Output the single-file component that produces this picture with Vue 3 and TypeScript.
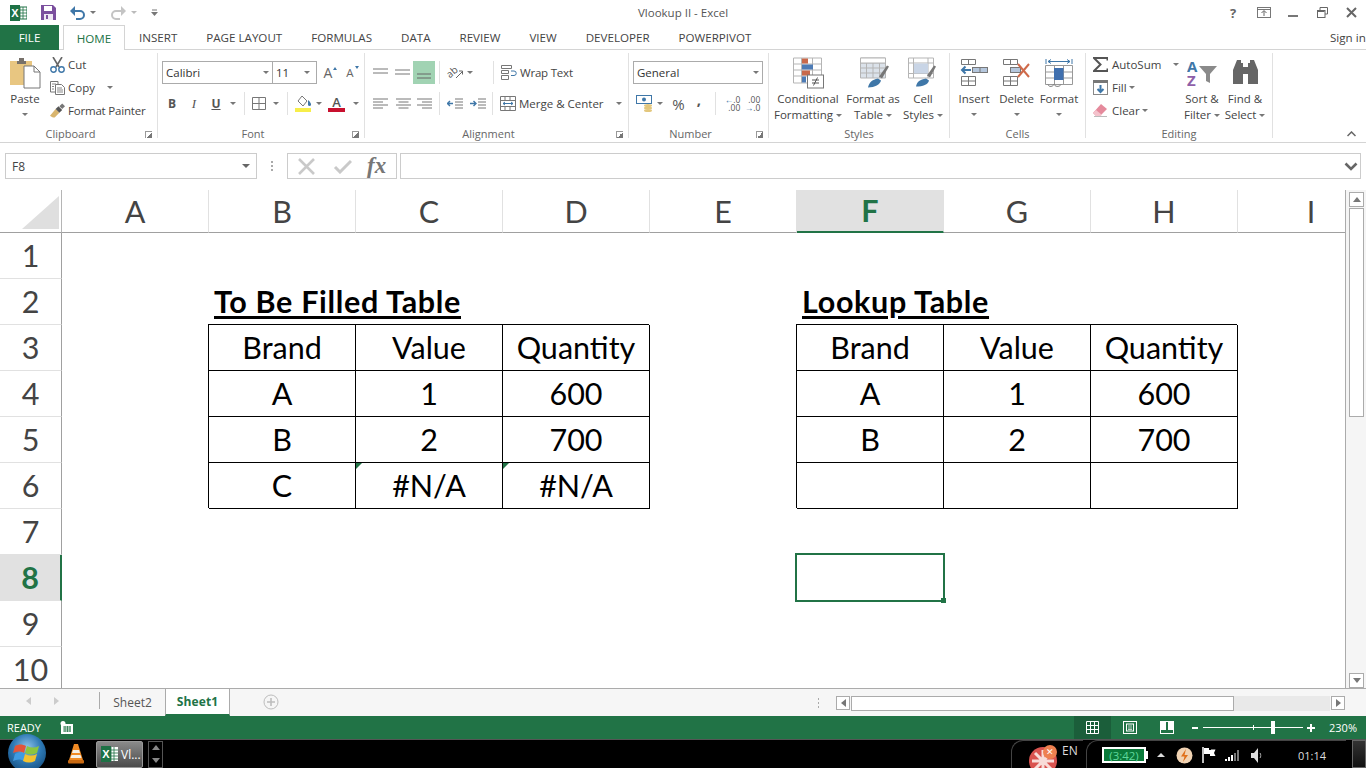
<script setup lang="ts">
const cols = ['A', 'B', 'C', 'D', 'E', 'F', 'G', 'H', 'I']
const rows = [1, 2, 3, 4, 5, 6, 7, 8, 9, 10]
const tabs = ['INSERT', 'PAGE LAYOUT', 'FORMULAS', 'DATA', 'REVIEW', 'VIEW', 'DEVELOPER', 'POWERPIVOT']

const values: Record<string, string> = {
  B2: 'To Be Filled Table', F2: 'Lookup Table',
  B3: 'Brand', C3: 'Value', D3: 'Quantity',
  B4: 'A', C4: '1', D4: '600',
  B5: 'B', C5: '2', D5: '700',
  B6: 'C', C6: '#N/A', D6: '#N/A',
  F3: 'Brand', G3: 'Value', H3: 'Quantity',
  F4: 'A', G4: '1', H4: '600',
  F5: 'B', G5: '2', H5: '700'
}

function cellClass(c: string, r: number) {
  return {
    title: r === 2,
    boxed: r >= 3 && r <= 6 && 'BCDFGH'.includes(c),
    flag: r === 6 && (c === 'C' || c === 'D')
  }
}
</script>

<template>
  <div class="app">
    <header class="titlebar">
      <div class="qat">
        <svg class="q-logo" width="17" height="16" viewBox="0 0 17 16"><rect x="7" y="2" width="10" height="12" fill="#fff" stroke="#1e7145"/><path d="M10 2v12M13 2v12M7 5h10M7 8h10M7 11h10" stroke="#1e7145" stroke-width=".8"/><rect width="10" height="16" fill="#1e7145"/><text x="5" y="12" text-anchor="middle" class="logo-x">X</text></svg>
        <svg class="q-save" width="15" height="15" viewBox="0 0 15 15"><path d="M0 0h12l3 3v12H0z" fill="#7b4f9e"/><rect x="3" y="1" width="8" height="5" fill="#fff"/><rect x="3" y="9" width="9" height="6" fill="#efe8f4"/><rect x="5" y="10" width="2" height="4" fill="#7b4f9e"/></svg>
        <svg class="q-undo" width="15" height="14" viewBox="0 0 15 14"><path d="M4 5h6a3.600 3.600 0 0 1 0 8H6" fill="none" stroke="#3f77a8" stroke-width="2"/><path d="M0 5l5-5v10z" fill="#3f77a8"/></svg>
        <i class="caret q-c1"></i>
        <svg class="q-redo" width="15" height="14" viewBox="0 0 15 14"><path d="M11 5H5a3.600 3.600 0 0 0 0 8h4" fill="none" stroke="#c4c4c4" stroke-width="2"/><path d="M15 5l-5-5v10z" fill="#c4c4c4"/></svg>
        <i class="caret q-c2 light"></i>
        <svg class="q-more" width="7" height="7" viewBox="0 0 7 7"><path d="M1 1h5" stroke="#777"/><path d="M0 3h7L3.500 7z" fill="#777"/></svg>
      </div>
      <div class="doc-title">Vlookup II - Excel</div>
      <div class="winbtns">
        <span class="help">?</span>
        <svg width="14" height="11" viewBox="0 0 14 11"><rect x=".5" y=".5" width="13" height="10" fill="none" stroke="#777"/><path d="M.5 2.500h13" stroke="#777"/><path d="M7 9V4M4.500 6L7 3.500 9.500 6" fill="none" stroke="#666"/></svg>
        <svg width="10" height="10" viewBox="0 0 10 10"><path d="M0 8h10" stroke="#777" stroke-width="2"/></svg>
        <svg width="11" height="11" viewBox="0 0 11 11"><path d="M3 3V.5h7.500V7H8" fill="none" stroke="#666"/><rect x=".5" y="3.500" width="7.500" height="7" fill="none" stroke="#666"/><path d="M1 4.500h6.500" stroke="#666"/></svg>
        <svg width="11" height="11" viewBox="0 0 11 11"><path d="M1 1l9 9M10 1l-9 9" stroke="#666" stroke-width="2"/></svg>
      </div>
    </header>

    <nav class="tabsrow">
      <div class="file">FILE</div>
      <div class="home">HOME</div>
      <div class="tabs">
        <span v-for="t in tabs" :key="t">{{ t }}</span>
      </div>
      <div class="signin">Sign in</div>
    </nav>

    <section class="ribbon">
      <!-- Clipboard -->
      <div class="group g-clip">
        <div class="body">
          <div class="big paste">
            <svg width="31" height="32" viewBox="0 0 31 32"><rect x="0" y="4" width="22" height="24" fill="#e8c681"/><path d="M7 4h2V1h5v3h2v3H7z" fill="#77716a"/><path d="M14 9h10l6 6v16H14z" fill="#fff" stroke="#777"/><path d="M24 9v6h6" fill="none" stroke="#777"/></svg>
            <span class="big-label">Paste</span>
            <i class="caret big-caret"></i>
          </div>
          <div class="stack">
            <div class="stack-row">
              <svg width="15" height="16" viewBox="0 0 15 16"><path d="M3 0l6 10M12 0L6 10" stroke="#666" stroke-width="1.600"/><circle cx="3.500" cy="12.500" r="2.700" fill="none" stroke="#3f77a8" stroke-width="1.400"/><circle cx="11.500" cy="12.500" r="2.700" fill="none" stroke="#3f77a8" stroke-width="1.400"/></svg>
              <span>Cut</span>
            </div>
            <div class="stack-row">
              <svg width="15" height="14" viewBox="0 0 15 14"><path d="M8 3V.5H.5V11H5" fill="#fff" stroke="#777"/><path d="M5.500 3.500h6l3 3v7h-9z" fill="#fff" stroke="#777"/><path d="M2 3h4M2 5.500h2M2 8h2M7 7h5M7 9h6M7 11h6" stroke="#888"/></svg>
              <span>Copy</span>
              <i class="caret copy-caret"></i>
            </div>
            <div class="stack-row">
              <svg width="15" height="15" viewBox="0 0 16 15"><path d="M0 13l6-7 4 4-5 5c-2 .5-3-1-5-2z" fill="#d9b56e"/><path d="M6 6l3-3 4 4-3 3z" fill="#555"/><path d="M10 3l3-3 3 3-3 3z" fill="#777"/></svg>
              <span class="tight">Format Painter</span>
            </div>
          </div>
        </div>
        <div class="label launchable">Clipboard<i class="launch"></i></div>
      </div>

      <!-- Font -->
      <div class="group g-font">
        <div class="body rows">
          <div class="row font-r1">
            <div class="select s-font"><span>Calibri</span><i class="caret"></i></div>
            <div class="select s-size"><span>11</span><i class="caret"></i></div>
            <span class="grow-a">A<i class="tri up"></i></span>
            <span class="shrink-a">A<i class="tri down"></i></span>
          </div>
          <div class="row font-r2">
            <b class="fmt">B</b>
            <i class="fmt ital">I</i>
            <u class="fmt und">U</u>
            <i class="caret"></i>
            <i class="sep"></i>
            <svg width="14" height="13" viewBox="0 0 14 13"><path d="M.5.500h13v12H.5zM7 .500v12M.5 6.500h13" fill="none" stroke="#777"/></svg>
            <i class="caret"></i>
            <i class="sep"></i>
            <svg width="17" height="17" viewBox="0 0 17 17"><path d="M3 6l4-5 5 5-4 5z" fill="#fff" stroke="#777"/><path d="M13 5c2 2 3 3 3 4.500a1.500 1.500 0 0 1-3 0z" fill="#3f77a8"/><rect y="13" width="16" height="4" fill="#f7ee4a"/></svg>
            <i class="caret"></i>
            <svg class="color-a" width="17" height="17" viewBox="0 0 17 17"><text x="8.500" y="12" text-anchor="middle" class="color-a-text">A</text><rect y="13" width="17" height="4" fill="#c8102e"/></svg>
            <i class="caret"></i>
          </div>
        </div>
        <div class="label launchable">Font<i class="launch"></i></div>
      </div>

      <!-- Alignment -->
      <div class="group g-align">
        <div class="body rows">
          <div class="flexrow">
            <svg width="15" height="9" viewBox="0 0 15 9"><path d="M0 1h15M0 5h15" stroke="#777"/></svg>
            <svg class="ml7" width="15" height="9" viewBox="0 0 15 9"><path d="M0 2h15M0 6h15" stroke="#777"/></svg>
            <span class="al-active"><svg width="14" height="7" viewBox="0 0 14 7"><path d="M0 1h14M0 5h14" stroke="#666"/></svg></span>
            <i class="sep ml4"></i>
            <svg class="ml7 orient-ic" width="16" height="15" viewBox="0 0 16 15"><text x="0" y="10" class="orient" transform="rotate(-40 6 8)">ab</text><path d="M9 13l6-6M12 6h3.500v3.500" fill="none" stroke="#666"/></svg>
            <i class="caret ml4"></i>
            <i class="sep sep-a"></i>
            <div class="txt-btn">
              <svg width="16" height="15" viewBox="0 0 16 15"><path d="M.5.500h10v3H.5zM.5 5.500h7v3h-7zM.5 10.500h7v4h-7z" fill="#fff" stroke="#777"/><path d="M10 6h3a2 2 0 0 1 0 4.500h-3" fill="none" stroke="#3f77a8"/></svg>
              <span class="tight">Wrap Text</span>
            </div>
          </div>
          <div class="flexrow">
            <svg width="15" height="11" viewBox="0 0 15 11"><path d="M0 1h15M0 4h10M0 7h15M0 10h10" stroke="#777"/></svg>
            <svg class="ml8" width="15" height="11" viewBox="0 0 15 11"><path d="M0 1h15M2.500 4h10M0 7h15M2.500 10h10" stroke="#777"/></svg>
            <svg class="ml6" width="15" height="11" viewBox="0 0 15 11"><path d="M0 1h15M5 4h10M0 7h15M5 10h10" stroke="#777"/></svg>
            <i class="sep ml7"></i>
            <svg class="ml7" width="16" height="11" viewBox="0 0 16 11"><path d="M8 1h8M8 4h8M8 7h8M8 10h8" stroke="#777"/><path d="M0 5.500h6M3 3L.5 5.500 3 8" fill="none" stroke="#3f77a8" stroke-width="1.400"/></svg>
            <svg class="ml7" width="16" height="11" viewBox="0 0 16 11"><path d="M8 1h8M8 4h8M8 7h8M8 10h8" stroke="#777"/><path d="M0 5.500h6M3.500 3L6 5.500 3.500 8" fill="none" stroke="#3f77a8" stroke-width="1.400"/></svg>
            <i class="sep ml6"></i>
            <div class="txt-btn">
              <svg width="16" height="15" viewBox="0 0 16 15"><path d="M.5.500h15v14H.5zM.5 4.500h15M.5 10.500h15M5 .500v4M10 .500v4M5 10.500v4M10 10.500v4" fill="#fff" stroke="#777"/><path d="M3 7.500h10M5 6L3 7.500 5 9M11 6l2 1.500L11 9" fill="none" stroke="#3f77a8"/></svg>
              <span>Merge &amp; Center</span>
              <i class="caret merge-caret"></i>
            </div>
          </div>
        </div>
        <div class="label launchable">Alignment<i class="launch"></i></div>
      </div>

      <!-- Number -->
      <div class="group g-num">
        <div class="body rows">
          <div class="row num-r1">
            <div class="select s-num"><span>General</span><i class="caret"></i></div>
          </div>
          <div class="row num-r2">
            <svg width="18" height="17" viewBox="0 0 18 17"><rect x=".5" y=".5" width="15" height="8" fill="#fff" stroke="#3f77a8"/><circle cx="8" cy="4.500" r="2" fill="#3f77a8"/><ellipse cx="12" cy="10.500" rx="4" ry="1.500" fill="#e3c77d"/><ellipse cx="12" cy="13" rx="4" ry="1.500" fill="#e3c77d"/><ellipse cx="12" cy="15.500" rx="4" ry="1.500" fill="#e3c77d"/></svg>
            <i class="caret"></i>
            <span class="pct">%</span>
            <span class="comma">,</span>
            <i class="sep"></i>
            <span class="dec"><small><em>←</em>.0</small><small>.00</small></span>
            <span class="dec"><small>.00</small><small><em>→</em>.0</small></span>
          </div>
        </div>
        <div class="label launchable">Number<i class="launch"></i></div>
      </div>

      <!-- Styles -->
      <div class="group g-styles">
        <div class="body">
          <div class="big w72">
            <svg width="31" height="31" viewBox="0 0 31 31"><path d="M.5.500h28v25H.5zM.5 6.500h28M.5 12.500h28M.5 18.500h28M8.500.500v25M19.500.500v25" fill="#fff" stroke="#b5b5b5"/><rect x="9" y="1" width="6" height="5" fill="#c9694a"/><rect x="9" y="7" width="11" height="5" fill="#4d7bb5"/><rect x="9" y="13" width="8" height="5" fill="#c9694a"/><rect x="9" y="19" width="4" height="6" fill="#4d7bb5"/><rect x="14.500" y="17.500" width="16" height="13" fill="#fff" stroke="#777"/><path d="M19 22.500h7M19 25.500h7M20.500 28l4-8" stroke="#555" fill="none"/></svg>
            <span class="big-label">Conditional<br />Formatting<i class="caret inl"></i></span>
          </div>
          <div class="big w58">
            <svg class="nudge" width="30" height="31" viewBox="0 0 30 31"><path d="M.5.500h25v20H.5zM.5 5.500h25M.5 10.500h25M.5 15.500h25M6.500.500v20M13 .500v20M19.500.500v20" fill="#dbe2ea" stroke="#b5b5b5"/><path d="M.5.500h25v5H.5z" fill="#fff" stroke="#b5b5b5"/><path d="M19 19l8-11 2 1-7 12z" fill="#777"/><path d="M8 30c1-5 4-8 10-9l3 2c-1 4-6 7-13 7z" fill="#3f77a8"/></svg>
            <span class="big-label">Format as<br />Table<i class="caret inl"></i></span>
          </div>
          <div class="big w42">
            <svg width="30" height="31" viewBox="0 0 30 31"><path d="M.5.500h25v20H.5zM.5 5.500h25M5.500.500v20M20 .500v20M.5 16h25" fill="#fff" stroke="#b5b5b5"/><rect x="6" y="6" width="14" height="10" fill="#c9d5e6"/><path d="M19 18l7-10 2 1-6 11z" fill="#777"/><path d="M8 29c1-5 4-7 10-8l3 2c-1 4-6 6-13 6z" fill="#3f77a8"/></svg>
            <span class="big-label">Cell<br />Styles<i class="caret inl"></i></span>
          </div>
        </div>
        <div class="label">Styles</div>
      </div>

      <!-- Cells -->
      <div class="group g-cells">
        <div class="body">
          <div class="big w44">
            <svg width="28" height="28" viewBox="0 0 28 28"><path d="M1.500.500h14v5h-14zM8.500.500v5M1.500 17.500h14v9h-14zM8.500 17.500v9M1.500 22h14" fill="none" stroke="#777"/><path d="M2 11h9M5.500 7.500L2 11l3.500 3.500" fill="none" stroke="#3f77a8" stroke-width="2"/><rect x="12.500" y="8.500" width="15" height="5" fill="#b4c6dc" stroke="#777"/><path d="M20 8.500v5" stroke="#777"/></svg>
            <span class="big-label">Insert</span>
            <i class="caret big-caret"></i>
          </div>
          <div class="big w41">
            <svg width="30" height="28" viewBox="0 0 30 28"><path d="M1.500.500h14v5h-14zM8.500.500v5M1.500 17.500h14v9h-14zM8.500 17.500v9M1.500 22h14" fill="none" stroke="#777"/><rect x="8.500" y="8.500" width="10" height="5" fill="#b4c6dc" stroke="#777"/><path d="M16 5l11 13M27 5L16 18" stroke="#cf6a4a" stroke-width="2"/></svg>
            <span class="big-label">Delete</span>
            <i class="caret big-caret"></i>
          </div>
          <div class="big w44">
            <svg width="28" height="30" viewBox="0 0 28 30"><path d="M1 1v5M27 1v5M3 3.500h22M3 3.500l3-2M3 3.500l3 2M25 3.500l-3-2M25 3.500l-3 2" fill="none" stroke="#3f77a8"/><path d="M.5 7.500h27v19H.5zM9.500 7.500v19M18.500 7.500v19M.5 14h27M.5 20h27" fill="#fff" stroke="#999"/><rect x="9" y="10" width="9.500" height="12" fill="#3f6fae"/><path d="M3 26.500c1 3 5 2 6 0 2 3 6 2 7 0" fill="none" stroke="#777"/></svg>
            <span class="big-label">Format</span>
            <i class="caret big-caret"></i>
          </div>
        </div>
        <div class="label">Cells</div>
      </div>

      <!-- Editing -->
      <div class="group g-edit">
        <div class="body">
          <div class="stack edit-stack">
            <div class="stack-row">
              <svg width="15" height="15" viewBox="0 0 15 15"><path d="M14.500 3.500V1H1l6.500 6.500L1 14h13.500v-2.500" fill="none" stroke="#555" stroke-width="2"/></svg>
              <span>AutoSum</span>
              <i class="caret sum-caret"></i>
            </div>
            <div class="stack-row">
              <svg width="15" height="15" viewBox="0 0 15 15"><rect x=".5" y=".5" width="14" height="14" fill="#fff" stroke="#888"/><rect width="15" height="3" fill="#777"/><path d="M7.500 5v7M4.500 9l3 3 3-3" fill="none" stroke="#3f77a8" stroke-width="2"/></svg>
              <span>Fill</span><i class="caret inl"></i>
            </div>
            <div class="stack-row">
              <svg width="15" height="13" viewBox="0 0 15 13"><path d="M0 9l8-9 6 5-7 7H3z" fill="#e58a9c"/><path d="M0 9l3-3 6 5-2 1H3z" fill="#f4c2cc"/><path d="M1 12.500h13" stroke="#bbb"/></svg>
              <span>Clear</span><i class="caret inl"></i>
            </div>
          </div>
          <div class="big w44">
            <svg class="sort" width="31" height="28" viewBox="0 0 31 28"><text x="0" y="13" class="az a">A</text><text x="0" y="27" class="az z">Z</text><path d="M12 7h18l-7 8v9l-4-2v-7z" fill="#8a8a8a"/></svg>
            <span class="big-label">Sort &amp;<br />Filter<i class="caret inl"></i></span>
          </div>
          <div class="big w42">
            <svg class="sort" width="27" height="28" viewBox="0 0 27 28"><path d="M5 1h4v3h2v21H1V11zM22 1h-4v3h-2v21h10V11z" fill="#666"/><rect x="11" y="8" width="5" height="7" fill="#666"/></svg>
            <span class="big-label">Find &amp;<br />Select<i class="caret inl"></i></span>
          </div>
        </div>
        <div class="label">Editing</div>
      </div>

      <svg class="collapse" width="9" height="6" viewBox="0 0 9 6"><path d="M.5 5l4-4 4 4" fill="none" stroke="#666" stroke-width="1.500"/></svg>
    </section>

    <section class="formula">
      <div class="namebox"><span>F8</span><i class="caret dark"></i></div>
      <div class="dots"><i></i><i></i><i></i></div>
      <div class="fxbox">
        <svg width="19" height="17" viewBox="0 0 19 17"><path d="M2 1l15 15M17 1L2 16" stroke="#c9c9c9" stroke-width="2.600"/></svg>
        <svg width="19" height="15" viewBox="0 0 19 15"><path d="M2 8l5 5L18 2" fill="none" stroke="#c9c9c9" stroke-width="3"/></svg>
        <span class="fx">fx</span>
      </div>
      <div class="fbar">
        <svg width="14" height="9" viewBox="0 0 14 9"><path d="M1.500 1.500L7 7l5.500-5.500" fill="none" stroke="#666" stroke-width="2.600"/></svg>
      </div>
    </section>

    <section class="sheetwrap">
      <div class="sheet">
        <div class="corner"><i></i></div>
        <div v-for="c in cols" :key="c" class="colhead" :class="{ sel: c === 'F' }">{{ c }}</div>
        <template v-for="r in rows" :key="r">
          <div class="rowhead" :class="{ sel: r === 8 }">{{ r }}</div>
          <div v-for="c in cols" :key="c + r" class="cell" :class="cellClass(c, r)">
            <span v-if="values[c + r]">{{ values[c + r] }}</span>
            <div v-if="c === 'F' && r === 8" class="active"><i></i></div>
          </div>
        </template>
      </div>
      <aside class="vscroll">
        <div class="sbtn"><i class="tri-up"></i></div>
        <div class="vthumb"></div>
        <div class="vtrack"></div>
        <div class="sbtn"><i class="tri-down"></i></div>
      </aside>
    </section>

    <section class="sheetbar">
      <div class="navs"><i class="nav-l"></i><i class="nav-r"></i></div>
      <div class="sheettabs">
        <span class="stab">Sheet2</span>
        <span class="stab on">Sheet1</span>
      </div>
      <svg class="plus" width="16" height="16" viewBox="0 0 16 16"><circle cx="8" cy="8" r="7" fill="none" stroke="#bdbdbd"/><path d="M8 4v8M4 8h8" stroke="#bdbdbd" stroke-width="1.600"/></svg>
      <div class="dots small"><i></i><i></i><i></i></div>
      <div class="hscroll">
        <div class="hbtn"><i class="tri-left"></i></div>
        <div class="hthumb"></div>
        <div class="htrack"></div>
        <div class="hbtn"><i class="tri-right"></i></div>
      </div>
    </section>

    <footer class="status">
      <span class="ready">READY</span>
      <svg class="macro" width="13" height="13" viewBox="0 0 13 13"><rect x="1" y="3" width="12" height="10" fill="#fff"/><circle cx="3" cy="2.500" r="2.500" fill="#fff"/><path d="M3 6h8M3 8h8M3 10h8M5 5v6M7.500 5v6M10 5v6" stroke="#217346" stroke-width=".8"/></svg>
      <div class="views">
        <span class="view on"><svg width="13" height="13" viewBox="0 0 13 13"><path d="M.5.500h12v12H.5zM4.500.500v12M8.500.500v12M.5 4.500h12M.5 8.500h12" fill="none" stroke="#fff"/></svg></span>
        <span class="view"><svg width="14" height="13" viewBox="0 0 14 13"><rect x=".5" y=".5" width="13" height="12" fill="none" stroke="#fff"/><rect x="3.500" y="3" width="7" height="7" fill="none" stroke="#fff"/><path d="M5 5h4M5 7h4M5 8.500h4" stroke="#fff" stroke-width=".7"/></svg></span>
        <span class="view"><svg width="14" height="13" viewBox="0 0 14 13"><rect x=".5" y=".5" width="13" height="12" fill="none" stroke="#fff"/><path d="M1 0h5v9H1zM8 0h5v9H8z" fill="#fff"/></svg></span>
      </div>
      <div class="zoom">
        <span class="z-minus"></span>
        <div class="z-slider"><i class="tick"></i><i class="knob"></i></div>
        <span class="z-plus"></span>
      </div>
      <span class="pctz">230%</span>
    </footer>

    <footer class="taskbar">
      <div class="orb">
        <svg width="28" height="26" viewBox="0 0 28 26"><path d="M2 6c4-2 7-2 11 0l-2 7c-3-2-7-2-11 0z" fill="#e2543a"/><path d="M14 6c4 2 8 2 12 0l-2 7c-4 2-8 2-12 0z" fill="#8cc63f"/><path d="M0 14c4-2 7-2 11 0l-2 7c-3-2-7-2-11 0z" fill="#3f9be2" transform="translate(2)"/><path d="M12 14c4 2 8 2 12 0l-2 7c-4 2-8 2-12 0z" fill="#f3c22f"/></svg>
      </div>
      <svg class="vlc" width="16" height="20" viewBox="0 0 16 20"><path d="M6 0h4l5 16H1z" fill="#f08a24"/><path d="M5 6h6l1 3H4zM3.500 11h9l1 3H2.500z" fill="#f4efe6"/><rect y="16" width="16" height="3.500" rx="1" fill="#c96a12"/></svg>
      <div class="taskbtn">
        <svg width="17" height="16" viewBox="0 0 17 16"><rect x="7" y="1" width="10" height="14" fill="#fff"/><path d="M10 1v14M13 1v14M7 4h10M7 7h10M7 10h10M7 13h10" stroke="#1e7145" stroke-width=".8"/><rect width="10" height="16" fill="#1e7145"/><text x="5" y="12" text-anchor="middle" class="logo-x">X</text></svg>
        <span>Vl...</span>
      </div>
      <div class="spinner"><i class="tri-up"></i><i class="tri-down"></i></div>
      <div class="tray-a">
        <div class="redapp">
          <svg width="28" height="28" viewBox="0 0 28 28"><path d="M14 3v25M3 14h22M6 6l16 16M22 6L6 22" stroke="#f8dcd8" stroke-width="3"/></svg>
          <span class="redx">✕</span>
        </div>
        <span class="en">EN</span>
      </div>
      <div class="tray-b">
        <div class="battery"><span>(3:42)</span></div>
        <i class="tray-up"></i>
        <svg class="t-bolt" width="17" height="17" viewBox="0 0 17 17"><circle cx="8.500" cy="8.500" r="8" fill="#f1d3b3"/><path d="M10 2L5 9.500h3.500L7 15l5-7H8.500z" fill="#e0701a"/></svg>
        <svg class="t-flag" width="14" height="16" viewBox="0 0 14 16"><path d="M1 0v16" stroke="#fff" stroke-width="1.500"/><path d="M2 1h5v2h2v-.5h4.500L12 6l1.500 3H8V7H2z" fill="#fff"/></svg>
        <svg class="t-sig" width="14" height="11" viewBox="0 0 14 11"><path d="M0 9h2v2H0zM3 7h2v4H3zM6 5h2v6H6z" fill="#fff"/><path d="M9 3h2v8H9zM12 0h2v11h-2z" fill="#777"/></svg>
        <svg width="12" height="15" viewBox="0 0 12 15"><path d="M0 5h3l4-5v15l-4-5H0z" fill="#ddd"/><path d="M9 5c1 1 1 4 0 5" fill="none" stroke="#aaa"/></svg>
        <span class="clock">01:14</span>
      </div>
      <div class="showdesk"></div>
    </footer>
  </div>
</template>

<style scoped>
.app { position: relative; width: 1366px; height: 768px; overflow: hidden; background: #fff; display: flex; flex-direction: column; font-family: "Open Sans", "Noto Sans", sans-serif; font-size: 11.5px; color: #444; }
.app i { font-style: normal; display: block; }
.caret { width: 0; height: 0; border-left: 3px solid transparent; border-right: 3px solid transparent; border-top: 3px solid #777; }
.caret.light { border-top-color: #bbb; }
.caret.dark { border-left-width: 4px; border-right-width: 4px; border-top-width: 4px; border-top-color: #666; }
.app .caret.inl { display: inline-block; vertical-align: middle; margin-left: 3px; }
.logo-x { font: bold 11px "Liberation Sans", sans-serif; fill: #fff; }
.ml4 { margin-left: 4px; } .ml6 { margin-left: 6px; } .ml7 { margin-left: 7px; } .ml8 { margin-left: 8px; }

/* title bar */
.titlebar { height: 25px; display: grid; grid-template-columns: 1fr auto 1fr; align-items: center; flex: none; }
.qat { display: flex; align-items: center; padding-left: 10px; }
.q-save { margin-left: 14px; }
.q-undo { margin-left: 14px; }
.q-c1 { margin-left: 5px; }
.q-redo { margin-left: 15px; }
.q-c2 { margin-left: 5px; }
.q-more { margin-left: 14px; }
.doc-title { text-align: center; color: #555; }
.winbtns { display: flex; justify-content: flex-end; align-items: center; padding-right: 9px; }
.help { font: bold 13px "Open Sans", sans-serif; color: #666; width: 8px; }
.winbtns svg:nth-of-type(1) { margin-left: 19px; }
.winbtns svg:nth-of-type(2) { margin-left: 17px; }
.winbtns svg:nth-of-type(3) { margin-left: 19px; }
.winbtns svg:nth-of-type(4) { margin-left: 18px; }

/* tabs */
.tabsrow { height: 25px; display: flex; flex: none; border-bottom: 1px solid #d4d4d4; box-sizing: border-box; font-size: 11.6px; }
.file { width: 59px; height: 25px; background: #217346; color: #fff; display: flex; align-items: center; justify-content: center; }
.home { margin-left: 4px; width: 62px; height: 25px; box-sizing: border-box; background: #fff; border: 1px solid #d4d4d4; border-bottom: none; color: #217346; display: flex; align-items: center; justify-content: center; }
.tabs { margin-left: 14px; display: flex; gap: 29px; align-items: center; height: 24px; color: #444; }
.signin { margin-left: auto; align-self: center; white-space: nowrap; width: 36px; }

/* ribbon */
.ribbon { height: 93px; flex: none; display: flex; box-sizing: border-box; border-bottom: 1px solid #d4d4d4; padding-top: 3px; position: relative; white-space: nowrap; }
.group { height: 85px; box-sizing: border-box; border-right: 1px solid #e1e1e1; display: flex; flex-direction: column; flex: none; }
.g-clip { width: 158px; } .g-font { width: 207px; } .g-align { width: 264px; }
.g-num { width: 140px; } .g-styles { width: 181px; } .g-cells { width: 136px; } .g-edit { width: 187px; }
.body { height: 73px; flex: none; display: flex; }
.body.rows { flex-direction: column; padding-top: 8px; gap: 8px; box-sizing: border-box; }
.label { height: 15px; flex: none; position: relative; text-align: center; color: #666; font-size: 11px; line-height: 15px; }
.label.launchable { padding-right: 16px; }
.launch { position: absolute; right: 5px; top: 5px; width: 6px; height: 6px; border-left: 1px solid #999; border-top: 1px solid #999; background: linear-gradient(135deg, transparent 50%, #777 50%); }
.big { display: flex; flex-direction: column; align-items: center; flex: none; padding-top: 4px; box-sizing: border-box; }
.big > svg { height: 32px; flex: none; }
.big > svg.nudge { margin-left: 4px; }
.big-label { text-align: center; line-height: 16px; margin-top: 2px; }
.big-caret { margin-top: 6px; }
.paste { width: 50px; }
.w72 { width: 72px; } .w58 { width: 58px; } .w42 { width: 42px; } .w44 { width: 44px; } .w41 { width: 41px; }
.g-styles .body { padding-left: 3px; }
.g-cells .body { padding-left: 2px; }
.stack { display: flex; flex-direction: column; }
.stack-row { height: 23px; display: flex; align-items: center; gap: 3px; }
.tight { letter-spacing: -0.2px; }
.g-clip .stack { width: 108px; }
.copy-caret { margin-left: 9px; }
.edit-stack { width: 94px; padding-left: 7px; box-sizing: border-box; }
.edit-stack .stack-row { gap: 4px; }
.sum-caret { margin-left: 8px; }
.app .stack-row .inl { margin-left: -2px; }
.collapse { position: absolute; right: 10px; top: 81px; }

.row { height: 23px; display: grid; align-items: center; justify-items: center; padding-left: 3px; }
.flexrow { height: 23px; display: flex; align-items: center; padding-left: 8px; }
.sep { width: 1px; height: 23px; background: #e1e1e1; flex: none; }
.select { height: 23px; box-sizing: border-box; border: 1px solid #ababab; background: #fff; display: flex; align-items: center; justify-content: space-between; padding: 0 3px 0 3px; justify-self: stretch; color: #333; }
.font-r1 { grid-template-columns: 111px 44px 22px 22px; padding-left: 4px; }
.s-size { margin-left: -1px; padding-right: 6px; }
.grow-a, .shrink-a { position: relative; font-size: 14px; color: #666; line-height: 1; }
.shrink-a { font-size: 11.5px; }
.tri { position: absolute; right: -5px; width: 0; height: 0; border-left: 2.5px solid transparent; border-right: 2.5px solid transparent; }
.tri.up { top: 1px; border-bottom: 3px solid #3f77a8; }
.tri.down { top: -1px; border-top: 3px solid #3f77a8; }
.font-r2 { grid-template-columns: 22px 22px 22px 12px 10px 20px 14px 8px 24px 8px 26px 14px; }
.fmt { font: bold 12px "Open Sans", sans-serif; color: #555; }
.app .ital { font: italic 13px "Liberation Serif", serif; }
.und { text-decoration: underline; }
.color-a, .orient-ic { overflow: visible; }
.color-a-text { font: 600 13px "Open Sans", sans-serif; fill: #555; }
.al-active { width: 22px; height: 23px; margin-left: 3px; background: #a1d3b3; display: flex; align-items: flex-end; justify-content: center; padding-bottom: 4px; box-sizing: border-box; flex: none; }
.orient { font: 10px "Open Sans", sans-serif; fill: #555; }
.sep-a { margin-left: 20px; }
.txt-btn { display: flex; align-items: center; gap: 3px; padding-left: 7px; }
.merge-caret { margin-left: 9px; }
.num-r1 { display: flex; padding-left: 4px; }
.s-num { width: 130px; padding-left: 3px; }
.num-r2 { grid-template-columns: 20px 10px 27px 14px 18px 17px 23px; padding-left: 6px; }
.pct { font-size: 15px; color: #555; }
.comma { font: bold 15px "Open Sans", sans-serif; color: #555; line-height: 1; margin-top: -8px; }
.dec { display: flex; flex-direction: column; align-items: flex-end; }
.dec small { font-size: 8.5px; line-height: 8px; color: #555; }
.dec em { font-style: normal; color: #3f77a8; }
.az { font: bold 15px "Open Sans", sans-serif; }
.az.a { fill: #3f77a8; }
.az.z { fill: #8e5fa8; }

/* formula bar */
.formula { height: 47px; flex: none; display: flex; padding: 10px 5px 11px; box-sizing: border-box; align-items: stretch; }
.namebox { width: 252px; box-sizing: border-box; border: 1px solid #ccc; display: flex; align-items: center; justify-content: space-between; padding: 0 6px; font-size: 12px; color: #444; }
.dots { width: 30px; display: flex; flex-direction: column; align-items: center; justify-content: center; gap: 2px; }
.dots i { width: 2px; height: 2px; background: #aaa; }
.fxbox { width: 110px; box-sizing: border-box; border: 1px solid #ccc; display: flex; align-items: center; gap: 17px; padding-left: 9px; overflow: hidden; }
.fx { font: italic bold 23px/24px "Liberation Serif", serif; color: #777; margin-left: -2px; }
.fbar { margin-left: 3px; flex: 1; box-sizing: border-box; border: 1px solid #ccc; display: flex; align-items: center; justify-content: flex-end; padding-right: 2px; }

/* sheet */
.sheetwrap { height: 498px; flex: none; display: flex; }
.sheet { width: 1345px; height: 498px; overflow: hidden; display: grid; grid-template-columns: 62px repeat(9, 147px); grid-template-rows: 43px repeat(10, 46px); font-family: Lato, "Open Sans", sans-serif; font-size: 30.5px; color: #000; }
.corner { border-right: 1px solid #b5b5b5; border-bottom: 1px solid #a0a0a0; box-sizing: border-box; padding: 6px 2px 3px 22px; }
.corner i { width: 37px; height: 33px; background: #dfdfdf; clip-path: polygon(100% 0, 100% 100%, 0 100%); }
.colhead { border-right: 1px solid #e1e1e1; border-bottom: 1px solid #a0a0a0; box-sizing: border-box; display: flex; align-items: center; justify-content: center; color: #444; padding-bottom: 1px; }
.colhead.sel { background: #e1e1e1; color: #217346; font-weight: 700; border-bottom: 2px solid #217346; }
.rowhead { border-right: 1px solid #a0a0a0; border-bottom: 1px solid #e1e1e1; box-sizing: border-box; display: flex; align-items: center; justify-content: center; color: #444; padding-bottom: 2px; }
.rowhead.sel { background: #e1e1e1; color: #217346; font-weight: 700; border-right: 2px solid #217346; }
.cell { position: relative; display: flex; align-items: center; justify-content: center; box-sizing: border-box; white-space: nowrap; min-width: 0; padding-bottom: 2px; }
.cell.title { justify-content: flex-start; padding-left: 5px; font-weight: 700; letter-spacing: .67px; }
.cell.title span { text-decoration: underline; text-decoration-thickness: 3px; text-underline-offset: 3px; }
.cell.boxed { border-right: 1px solid #000; border-bottom: 1px solid #000; box-shadow: -1px -1px 0 #000; }
.cell.flag::before { content: ""; position: absolute; left: 0; top: 0; width: 6px; height: 6px; background: #217346; clip-path: polygon(0 0, 100% 0, 0 100%); }
.active { position: absolute; left: -2px; top: -2px; right: -1px; bottom: -1px; border: 2px solid #217346; z-index: 2; }
.active i { position: absolute; right: -3px; bottom: -3px; width: 5px; height: 5px; background: #217346; }

.vscroll { width: 21px; box-sizing: border-box; background: #f5f5f5; border-left: 1px solid #ababab; padding: 2px 2px 0 3px; display: flex; flex-direction: column; }
.sbtn { height: 15px; flex: none; background: #fff; border: 1px solid #ababab; box-sizing: border-box; display: flex; align-items: center; justify-content: center; }
.vthumb { height: 209px; flex: none; background: #fff; border: 1px solid #ababab; box-sizing: border-box; margin-top: 1px; }
.vtrack { flex: 1; }
.tri-up { width: 0; height: 0; border-left: 4px solid transparent; border-right: 4px solid transparent; border-bottom: 5px solid #777; }
.tri-down { width: 0; height: 0; border-left: 4px solid transparent; border-right: 4px solid transparent; border-top: 5px solid #777; }
.tri-left { width: 0; height: 0; border-top: 4px solid transparent; border-bottom: 4px solid transparent; border-right: 5px solid #777; }
.tri-right { width: 0; height: 0; border-top: 4px solid transparent; border-bottom: 4px solid transparent; border-left: 5px solid #777; }

/* sheet bar */
.sheetbar { height: 28px; flex: none; box-sizing: border-box; border-top: 1px solid #ababab; background: #f6f6f6; display: flex; align-items: stretch; }
.navs { width: 100px; box-sizing: border-box; display: flex; align-items: center; gap: 23px; padding-left: 26px; border-right: 1px solid #ababab; margin: 3px 0 7px; }
.nav-l { width: 0; height: 0; border-top: 4px solid transparent; border-bottom: 4px solid transparent; border-right: 5px solid #ccc; }
.nav-r { width: 0; height: 0; border-top: 4px solid transparent; border-bottom: 4px solid transparent; border-left: 5px solid #ccc; }
.sheettabs { display: flex; }
.stab { width: 65px; display: flex; align-items: center; justify-content: center; box-sizing: border-box; font-size: 12px; color: #555; padding-bottom: 1px; }
.stab.on { background: #fff; color: #217346; font-weight: 700; letter-spacing: .1px; border-left: 1px solid #ababab; border-right: 1px solid #ababab; border-bottom: 2px solid #217346; }
.plus { margin: 5px 0 0 33px; }
.dots.small { width: 30px; margin-left: 524px; }
.dots.small i { width: 1px; height: 2px; }
.hscroll { margin: 7px 0 5px 3px; display: flex; width: 509px; }
.hbtn { width: 14px; height: 14px; background: #fff; border: 1px solid #ababab; box-sizing: border-box; display: flex; align-items: center; justify-content: center; flex: none; }
.hthumb { width: 383px; margin-left: 1px; background: #fff; border: 1px solid #ababab; box-sizing: border-box; flex: none; }
.htrack { flex: 1; background: #e9e9e9; margin-right: 1px; }

/* status */
.status { height: 23px; flex: none; background: #217346; display: flex; align-items: center; color: #fff; font-size: 11px; }
.ready { margin-left: 7px; width: 53px; }
.views { margin-left: auto; display: flex; align-items: center; }
.view { width: 37px; height: 23px; display: flex; align-items: center; justify-content: center; }
.view.on { background: #1b5e3a; }
.zoom { display: flex; align-items: center; margin-left: 7px; }
.z-minus { width: 6px; height: 2px; background: #fff; margin-right: 5px; }
.z-slider { width: 100px; height: 1px; background: #fff; position: relative; }
.tick { position: absolute; left: 50px; top: -2px; width: 1px; height: 5px; background: #fff; }
.knob { position: absolute; left: 68px; top: -6px; width: 4px; height: 13px; background: #fff; }
.z-plus { width: 8px; height: 8px; margin-left: 4px; background: linear-gradient(#fff, #fff) center/8px 2px no-repeat, linear-gradient(#fff, #fff) center/2px 8px no-repeat; }
.pctz { margin: 0 9px 0 14px; font-size: 11px; }

/* taskbar */
.taskbar { height: 29px; flex: none; background: #000; border-top: 1px solid #555; box-sizing: border-box; display: flex; align-items: center; position: relative; color: #ddd; }
.orb { position: absolute; left: 8px; top: -6px; width: 38px; height: 38px; border-radius: 50%; background: radial-gradient(circle at 50% 35%, #8fc3e8 0, #2d79b5 45%, #0c3b66 100%); display: flex; align-items: center; justify-content: center; }
.vlc { margin-left: 68px; }
.taskbtn { margin-left: 12px; width: 47px; height: 27px; box-sizing: border-box; border: 1px solid #999; border-radius: 2px; background: linear-gradient(#8a8a8a, #4a4a4a); display: flex; align-items: center; gap: 3px; padding-left: 4px; font-size: 12px; color: #fff; }
.spinner { margin-left: 5px; width: 15px; height: 27px; box-sizing: border-box; border: 1px solid #555; display: flex; flex-direction: column; align-items: center; justify-content: space-around; }
.spinner .tri-up { border-bottom-color: #888; }
.spinner .tri-down { border-top-color: #888; }
.tray-a { position: absolute; left: 1011px; top: 0; width: 72px; height: 29px; box-sizing: border-box; border: 1px solid #444; border-bottom: none; border-right: none; border-radius: 12px 0 0 0; overflow: hidden; }
.redapp { position: absolute; left: 17px; top: 6px; width: 28px; height: 28px; border-radius: 50%; background: #d9534f; }
.redapp svg { display: block; border-radius: 50%; }
.redx { position: absolute; right: 0; top: -2px; width: 14px; height: 14px; border-radius: 50%; background: #ee8050; color: #fff; font-size: 9px; line-height: 14px; text-align: center; }
.en { position: absolute; left: 50px; top: 1px; font-size: 12px; color: #ddd; }
.tray-b { position: absolute; left: 1086px; top: 0; width: 260px; height: 29px; box-sizing: border-box; border: 1px solid #444; border-bottom: none; border-right: none; border-radius: 12px 0 0 0; display: flex; align-items: center; padding-left: 15px; }
.battery { position: relative; width: 44px; height: 16px; box-sizing: border-box; border: 2px solid #fff; background: #0a7a3a; display: flex; align-items: center; justify-content: center; font-size: 11.5px; color: #5fd79c; }
.battery::after { content: ""; position: absolute; right: -4px; top: 2px; width: 2px; height: 8px; background: #fff; }
.tray-up { margin: 0 11px 0 11px; width: 0; height: 0; border-left: 4px solid transparent; border-right: 4px solid transparent; border-bottom: 4px solid #ddd; }
.t-bolt { margin-right: 9px; }
.t-flag { margin-right: 9px; }
.t-sig { margin-right: 12px; }
.clock { margin-left: 35px; font-size: 11px; color: #ddd; }
.showdesk { position: absolute; right: 0; top: 0; width: 14px; height: 28px; box-sizing: border-box; border: 1px solid #666; background: linear-gradient(#333, #111); }
</style>
